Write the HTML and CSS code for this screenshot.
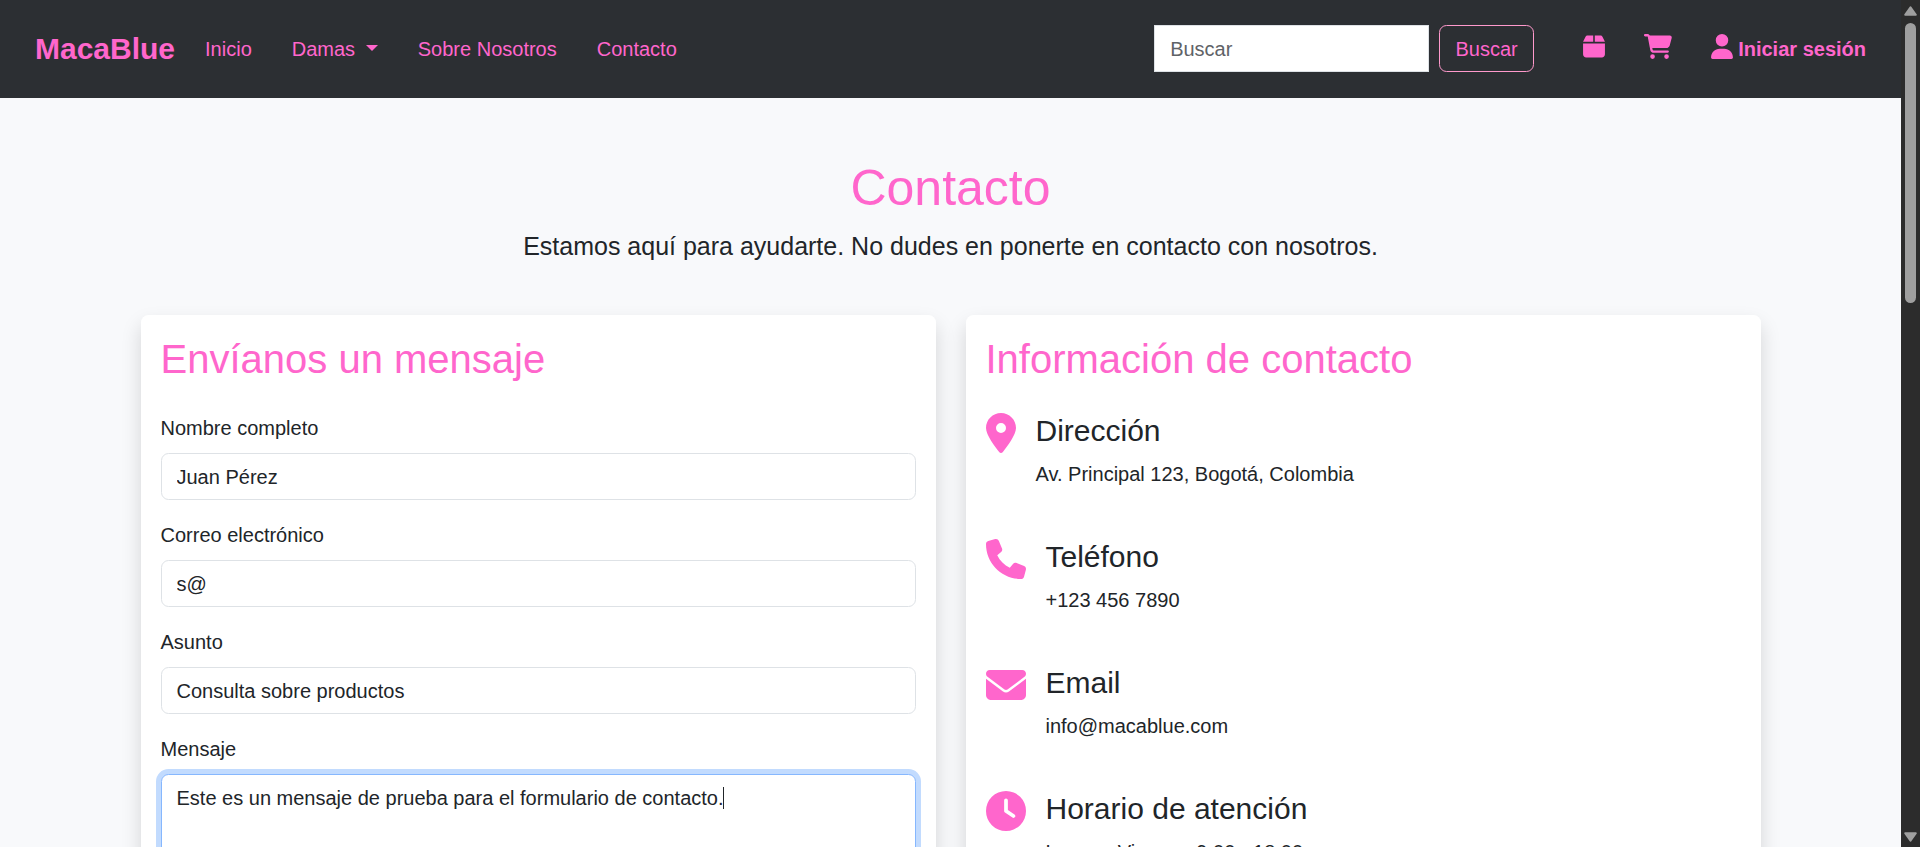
FILE: index.html
```html
<!DOCTYPE html>
<html lang="es">
<head>
<meta charset="utf-8">
<title>MacaBlue - Contacto</title>
<link rel="stylesheet" href="styles.css">
</head>
<body>
<div class="window">
  <div class="page">
    <nav class="navbar">
      <a class="brand">MacaBlue</a>
      <ul class="nav-links">
        <li><a>Inicio</a></li>
        <li><a>Damas <span class="caret"></span></a></li>
        <li><a>Sobre Nosotros</a></li>
        <li><a>Contacto</a></li>
      </ul>
      <form class="search">
        <input class="search-input" type="search" placeholder="Buscar">
        <button class="search-button" type="button">Buscar</button>
      </form>
      <div class="actions">
        <a><svg class="icon icon-box" viewBox="0 0 448 512"><path d="M50.7 58.5L0 160H208V32H93.7C75.5 32 58.9 42.3 50.7 58.5zM240 160H448L397.3 58.5C389.1 42.3 372.5 32 354.3 32H240V160zm208 32H0V416c0 35.3 28.7 64 64 64H384c35.3 0 64-28.7 64-64V192z"/></svg></a>
        <a><svg class="icon icon-cart" viewBox="0 0 576 512"><path d="M0 24C0 10.7 10.7 0 24 0H69.5c22 0 41.5 12.8 50.6 32h411c26.3 0 45.5 25 38.6 50.4l-41 152.3c-8.5 31.4-37 53.3-69.5 53.3H170.7l5.4 28.5c2.2 11.3 12.1 19.5 23.6 19.5H488c13.3 0 24 10.7 24 24s-10.7 24-24 24H199.7c-34.6 0-64.3-24.6-70.7-58.5L77.4 54.5c-.7-3.8-4-6.5-7.9-6.5H24C10.7 48 0 37.3 0 24zM128 464a48 48 0 1 1 96 0 48 48 0 1 1 -96 0zm336-48a48 48 0 1 1 0 96 48 48 0 1 1 0-96z"/></svg></a>
        <a class="login"><svg class="icon icon-box" viewBox="0 0 448 512"><path d="M224 256A128 128 0 1 0 224 0a128 128 0 1 0 0 256zm-45.7 48C79.8 304 0 383.8 0 482.3C0 498.7 13.3 512 29.7 512H418.3c16.4 0 29.7-13.3 29.7-29.7C448 383.8 368.2 304 269.7 304H178.3z"/></svg><span>Iniciar sesión</span></a>
      </div>
    </nav>

    <main class="container">
      <header class="intro">
        <h1>Contacto</h1>
        <p>Estamos aquí para ayudarte. No dudes en ponerte en contacto con nosotros.</p>
      </header>

      <div class="columns">
        <section class="card">
          <h2>Envíanos un mensaje</h2>
          <div class="field">
            <label for="name">Nombre completo</label>
            <input id="name" class="control" type="text" value="Juan Pérez">
          </div>
          <div class="field">
            <label for="email">Correo electrónico</label>
            <input id="email" class="control" type="text" value="s@">
          </div>
          <div class="field">
            <label for="subject">Asunto</label>
            <input id="subject" class="control" type="text" value="Consulta sobre productos">
          </div>
          <div class="field">
            <label>Mensaje</label>
            <div class="control message" role="textbox">Este es un mensaje de prueba para el formulario de contacto.<span class="text-cursor"></span></div>
          </div>
        </section>

        <section class="card">
          <h2>Información de contacto</h2>
          <div class="info">
            <svg class="icon info-pin" viewBox="0 0 384 512"><path d="M215.7 499.2C267 435 384 279.4 384 192C384 86 298 0 192 0S0 86 0 192c0 87.4 117 243 168.3 307.2c12.3 15.3 35.1 15.3 47.4 0zM192 128a64 64 0 1 1 0 128 64 64 0 1 1 0-128z"/></svg>
            <div><h4>Dirección</h4><p>Av. Principal 123, Bogotá, Colombia</p></div>
          </div>
          <div class="info">
            <svg class="icon info-icon" viewBox="0 0 512 512"><path d="M164.9 24.6c-7.7-18.6-28-28.5-47.4-23.2l-88 24C12.1 30.2 0 46 0 64C0 311.4 200.6 512 448 512c18 0 33.8-12.1 38.6-29.5l24-88c5.3-19.4-4.6-39.7-23.2-47.4l-96-40c-16.3-6.8-35.2-2.1-46.3 11.6L304.7 368C234.3 334.7 177.3 277.7 144 207.3L193.3 167c13.7-11.2 18.4-30 11.6-46.3l-40-96z"/></svg>
            <div><h4>Teléfono</h4><p>+123 456 7890</p></div>
          </div>
          <div class="info">
            <svg class="icon info-icon" viewBox="0 0 512 512"><path d="M48 64C21.5 64 0 85.5 0 112c0 15.1 7.1 29.3 19.2 38.4L236.8 313.6c11.4 8.5 27 8.5 38.4 0L492.8 150.4c12.1-9.1 19.2-23.3 19.2-38.4c0-26.5-21.5-48-48-48H48zM0 176V384c0 35.3 28.7 64 64 64H448c35.3 0 64-28.7 64-64V176L294.4 339.2c-22.8 17.1-54 17.1-76.8 0L0 176z"/></svg>
            <div><h4>Email</h4><p>info@macablue.com</p></div>
          </div>
          <div class="info">
            <svg class="icon info-icon" viewBox="0 0 512 512"><path d="M256 0a256 256 0 1 1 0 512A256 256 0 1 1 256 0zM232 120V256c0 8 4 15.5 10.7 20l96 64c11 7.4 25.9 4.4 33.3-6.7s4.4-25.9-6.7-33.3L280 243.2V120c0-13.3-10.7-24-24-24s-24 10.7-24 24z"/></svg>
            <div><h4>Horario de atención</h4><p>Lunes - Viernes: 9:00 - 18:00</p></div>
          </div>
        </section>
      </div>
    </main>
  </div>
  <div class="scrollbar">
    <svg class="arrow" viewBox="0 0 13 10"><path d="M6.5 1.2L11.8 8.8H1.2z"/></svg>
    <div class="track"><div class="thumb"></div></div>
    <svg class="arrow" viewBox="0 0 13 10"><path d="M6.5 8.8L11.8 1.2H1.2z"/></svg>
  </div>
</div>
</body>
</html>
```

FILE: styles.css
```css
* { box-sizing: border-box; }

body {
  margin: 0;
  font-family: "Liberation Sans", Arial, sans-serif;
  font-size: 20px;
  line-height: 1.5;
  color: #212529;
  background: #f8f9fb;
}

h1, h2, h4, p, ul { margin: 0; padding: 0; font-weight: 400; }

.window {
  display: flex;
  height: 100vh;
  overflow: hidden;
}

.page {
  flex: 1;
  overflow: hidden;
}

/* Navigation */
.navbar {
  display: flex;
  align-items: center;
  height: 98px;
  padding: 0 35px 1px 35px;
  background: #2c2f33;
  color: #ff66cc;
}

.brand {
  margin-right: 20px;
  padding-bottom: 1px;
  font-size: 30px;
  font-weight: 700;
}

.nav-links {
  display: flex;
  list-style: none;
}

.nav-links li {
  margin-right: 20px;
  padding: 0 10px;
}

.caret {
  display: inline-block;
  margin-left: 5.1px;
  vertical-align: 5px;
  border-top: 6px solid;
  border-left: 6px solid transparent;
  border-right: 6px solid transparent;
}

.search {
  display: flex;
  gap: 10px;
  margin-left: auto;
}

.search-input {
  width: 275px;
  height: 47px;
  padding: 1px 15px 0;
  border: 1px solid #dee2e6;
  border-radius: 0;
  background: #fff;
  font: inherit;
  appearance: none;
}

.search-input::placeholder { color: #5f6367; opacity: 1; }

.search-button {
  width: 95px;
  height: 47px;
  padding: 0;
  border: 1px solid #ff99cc;
  border-radius: 7.5px;
  background: transparent;
  color: #ff66cc;
  font: inherit;
}

.icon {
  display: block;
  flex: none;
  fill: #ff66cc;
}

.actions {
  display: flex;
  align-items: center;
  gap: 39px;
  margin-left: 49px;
}

.actions .icon { height: 25px; margin-bottom: 4px; }
.icon-box { width: 22px; }
.icon-cart { width: 28px; }

.login {
  display: flex;
  align-items: center;
  gap: 5px;
  font-weight: 700;
}

/* Contact content */
.container {
  width: 1620px;
  margin: 0 auto;
  padding-top: 60px;
}

.intro { text-align: center; margin-bottom: 49.5px; }

.intro h1 {
  margin-bottom: 10px;
  font-size: 50px;
  line-height: 1.2;
  color: #ff66cc;
}

.intro p { font-size: 25px; }

.columns {
  display: grid;
  grid-template-columns: 1fr 1fr;
  gap: 30px;
}

.card {
  min-height: 700px;
  padding: 20px;
  border-radius: 7.5px;
  background: #fff;
  box-shadow: 0 10px 20px rgba(0, 0, 0, 0.15);
}

.card h2 {
  margin-bottom: 30px;
  font-size: 40px;
  line-height: 1.2;
  color: #ff66cc;
}

.field { margin-bottom: 20px; }

.field label {
  display: block;
  margin-bottom: 10px;
}

.control {
  display: block;
  width: 100%;
  height: 47px;
  padding: 8px 15px 7px;
  border: 1px solid #dee2e6;
  border-radius: 7.5px;
  background: #fff;
  color: #212529;
  font: inherit;
  line-height: 1.5;
}

.message {
  height: 167px;
  padding-top: 7.5px;
  border-color: #86b7fe;
  box-shadow: 0 0 0 5px #c2dbfe;
}

.text-cursor {
  display: inline-block;
  width: 1px;
  height: 22px;
  margin-left: -1px;
  vertical-align: -4px;
  background: #212529;
}

.info {
  display: flex;
  gap: 20px;
  margin-bottom: 50px;
}

.info h4 {
  margin-bottom: 10px;
  font-size: 30px;
  line-height: 1.2;
}

.info-pin { width: 30px; height: 40px; }
.info-icon { width: 40px; height: 40px; }

/* Window scrollbar */
.scrollbar {
  display: flex;
  flex-direction: column;
  align-items: center;
  width: 19px;
  padding: 6px 0 5px;
  background: #2c2c2c;
}

.track { flex: 1; padding-top: 7px; }

.thumb {
  width: 11px;
  height: 280px;
  border-radius: 6px;
  background: #9f9f9f;
}

.arrow {
  width: 13px;
  height: 10px;
  fill: #9f9f9f;
  stroke: #9f9f9f;
  stroke-width: 2;
  stroke-linejoin: round;
}
```
